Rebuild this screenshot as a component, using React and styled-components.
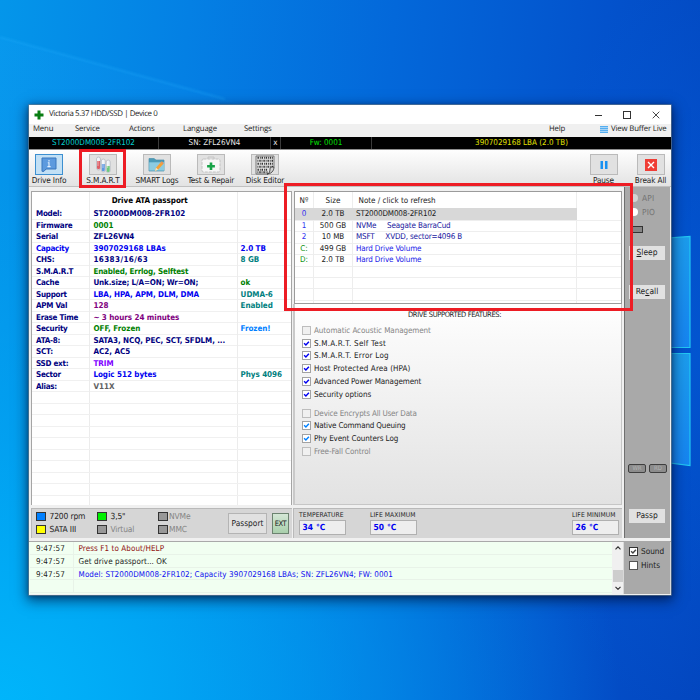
import React from "react";
import styled, { createGlobalStyle, css } from "styled-components";

const Global = createGlobalStyle`
  * { box-sizing: border-box; }
  body { margin: 0; }
  #root { width: 700px; height: 700px; overflow: hidden; }
`;

const tahoma = css`font-family: "DejaVu Sans Condensed", "DejaVu Sans", sans-serif; font-stretch: condensed;`;
const segoe = css`font-family: "Open Sans", "Noto Sans", sans-serif; font-stretch: normal;`;

const Desktop = styled.main`
  position: relative;
  width: 700px;
  height: 700px;
  padding: 105px 29px 0;
  overflow: hidden;
  ${tahoma}
  font-size: 8px;
  line-height: 11px;
  color: #1c1c1c;
  white-space: nowrap;
  text-rendering: geometricPrecision;
  background:
    radial-gradient(ellipse 620px 520px at 0 700px, rgba(0, 184, 252, 0.92), rgba(0, 170, 245, 0.6) 50%, transparent),
    radial-gradient(ellipse 180px 380px at 700px 350px, rgba(0, 100, 225, 0.45), transparent),
    linear-gradient(95deg, #0496ea 0%, #0480e4 25%, #0368da 52%, #0352cc 80%, #0345be 100%);
`;

const Wallpaper = styled.svg`
  position: absolute;
  inset: 0;
`;

const Window = styled.section`
  position: relative;
  display: flex;
  flex-direction: column;
  width: 642px;
  height: 490px;
  background: #f0f0f0;
  box-shadow: 0 0 0 0.6px #6b8090, 0 4px 12px 2px rgba(0, 15, 50, 0.6), 0 1px 5px rgba(0, 15, 50, 0.5);
`;

const TitleBar = styled.header`
  display: flex;
  align-items: center;
  height: 19px;
  padding: 0 11px 0 5px;
  background: #fff;
  ${segoe}
  font-size: 7.9px;
  letter-spacing: -0.4px;
  svg { flex: none; }
`;
const Title = styled.span`margin: 0 auto 0 5px;`;
const Controls = styled.div`display: flex; gap: 21px; align-items: center;`;

const MenuBar = styled.nav`
  display: grid;
  grid-template-columns: 42px 54px 54px 61px 305px 51px 11px 1fr;
  align-items: center;
  height: 13px;
  padding-left: 4px;
  padding-bottom: 2px;
  background: #f0f0f0;
  ${segoe}
  font-size: 7.8px;
  letter-spacing: -0.16px;
`;

const StatusStrip = styled.div`
  display: grid;
  grid-template-columns: 130px 112px 10px 91px 1fr;
  height: 12px;
  background: #000;
  text-align: center;
`;
const StatusCell = styled.div`
  color: ${(p) => p.$c};
  border-right: ${(p) => (p.$last ? "0" : "1px solid #3a3a3a")};
`;

const Toolbar = styled.div`
  display: flex;
  justify-content: space-between;
  height: 38px;
  padding-top: 4px;
  border-top: 1px solid #8d8d8d;
  border-bottom: 1px solid #c0c0c0;
  background: linear-gradient(#fefefe, #e3e3e3);
`;
const ToolGroup = styled.div`
  display: flex;
  margin: ${(p) => (p.$end ? "0 -3px 0 0" : "0 0 0 -7px")};
`;
const Tool = styled.div`
  display: flex;
  flex-direction: column;
  align-items: center;
  width: ${(p) => p.$w}px;
  font-size: 8.2px;
  letter-spacing: -0.14px;
`;
const ToolFace = styled.div`
  display: grid;
  place-items: center;
  width: 28px;
  height: 21px;
  border: 1px solid ${(p) => (p.$on ? "#3c8fd0" : "#bababa")};
  background: ${(p) => (p.$on ? "#c2e0f5" : "#e1e1e1")};
`;

const Body = styled.div`display: flex; height: 354px;`;
const Left = styled.div`width: 264px; padding: 4px 1px 0 2px;`;
const Right = styled.div`width: 331px; padding: 4px 2px 0 0;`;

const Passport = styled.div`
  height: 314px;
  overflow: hidden;
  border: 1px solid #a5a5a5;
  border-bottom: 0;
  background: #fff;
  font-weight: 700;
`;
const PassportRow = styled.div`
  display: grid;
  grid-template-columns: 58px 148px 1fr;
  height: ${(p) => (p.$head ? 16 : 11.5)}px;
  line-height: ${(p) => (p.$head ? 17 : 11.5)}px;
  border-bottom: ${(p) => (p.$head ? 0 : "1px solid #f0f0f0")};
`;
const PassportCell = styled.div`
  padding-left: 3.4px;
  border-right: 1px solid #ececec;
  color: ${(p) => p.$c || "#000080"};
  text-align: ${(p) => p.$align || "left"};
  padding-right: ${(p) => (p.$align ? 31 : 0)}px;
  letter-spacing: ${(p) => p.$ls || 0}px;
  &:first-child { padding-left: 4px; letter-spacing: -0.26px; }
  &:last-child { border-right: 0; padding-left: 2.6px; letter-spacing: -0.06px; }
`;

const Strip = styled.div`
  display: flex;
  align-items: center;
  height: 30px;
  margin-top: 3px;
  border-top: 1px solid #b9b9b9;
  border-left: 1px solid #b9b9b9;
  background: #d6d6d6;
`;
const Legend = styled.div`
  display: grid;
  grid-template-columns: 61px 61px 70px;
  grid-template-rows: 13px 13px;
  padding: 0 0 1px 4px;
  font-size: 8.4px;
`;
const LegendItem = styled.div`
  display: flex;
  align-items: center;
  gap: ${(p) => p.$gap}px;
  color: ${(p) => (p.$off ? "#858585" : "#1c1c1c")};
  letter-spacing: -0.12px;
`;
const Swatch = styled.i`
  width: 10px;
  height: 9px;
  border: 1px solid #333;
  background: ${(p) => p.$c};
`;
const Button = styled.div`
  display: grid;
  place-items: center;
  width: 39px;
  height: 21px;
  margin-right: 5px;
  border: 1px solid #b4b4b4;
  background: #e1e1e1;
  font-size: 8.3px;
`;
const ExtButton = styled(Button)`
  width: 17px;
  margin-right: 0;
  border-color: #6c8370;
  background: linear-gradient(#d4e7d6, #a9cfac);
  font-size: 7.5px;
  letter-spacing: -0.5px;
`;

const Drives = styled.div`
  height: 113px;
  margin-left: 1px;
  overflow: hidden;
  border: 1px solid #9b9b9b;
  background: #fff;
`;
const DriveRow = styled.div`
  display: grid;
  grid-template-columns: 19px 39px 224px 1fr;
  height: ${(p) => (p.$head ? 16 : 11.6)}px;
  line-height: ${(p) => (p.$head ? 17 : 11.6)}px;
  white-space: pre;
`;
const DriveCell = styled.div`
  padding-left: ${(p) => p.$pl || 0}px;
  text-align: ${(p) => (p.$center ? "center" : "left")};
  letter-spacing: ${(p) => p.$ls || 0}px;
  color: ${(p) => p.$c || "#1c1c1c"};
  background: ${(p) => (p.$hl ? "#d8d8d8" : "transparent")};
  border-right: 1px solid ${(p) => (p.$hl ? "#d8d8d8" : "#ededed")};
  border-bottom: ${(p) => (p.$head ? 0 : "1px solid #eeeeee")};
  &:last-child { border-right: 0; }
`;

const Features = styled.div`
  height: 201px;
  padding: 6px 0 0 7px;
  border: 1px solid #c6c6c6;
  border-left: 2px solid #c9c9c9;
  border-top: 0;
  background: linear-gradient(#fff, #fafafa 15%, #e2e2e2);
`;
const FeatureTitle = styled.div`
  height: 14px;
  padding-left: 106px;
  font-size: 7.5px;
  letter-spacing: -0.36px;
  line-height: 10px;
`;
const Feature = styled.div`
  display: flex;
  align-items: center;
  gap: 3px;
  height: 12.8px;
  margin-bottom: ${(p) => (p.$gap ? 6 : 0)}px;
  color: ${(p) => (p.$off ? "#858585" : "#1c1c1c")};
  letter-spacing: ${(p) => p.$ls || -0.08}px;
`;

const Readings = styled(Strip)`
  align-items: flex-start;
  padding: 2px 3px 0 5px;
  gap: 24px;
`;
const Reading = styled.div`
  width: 47px;
  margin-left: ${(p) => (p.$end ? "auto" : 0)};
  font-size: 6.7px;
  line-height: 9px;
  letter-spacing: 0.1px;
`;
const ReadingBox = styled.div`
  width: 47px;
  height: 15px;
  padding-left: 2.5px;
  border: 1px solid #b0b0b0;
  background: #eeeeee;
  color: #0000f0;
  font-size: 8.4px;
  line-height: 13px;
  letter-spacing: 0.1px;
  font-weight: 700;
`;

const Side = styled.aside`
  display: flex;
  flex-direction: column;
  width: 46px;
  height: 351px;
  padding: 4px 0 0 5px;
  border-left: 1px solid #6f6f6f;
  background: #a9a9a9;
`;
const Radio = styled.div`
  display: flex;
  align-items: center;
  gap: 4px;
  height: 14px;
  color: #747474;
  font-size: 8.3px;
  letter-spacing: 0.2px;
  i { width: 8px; height: 8px; border-radius: 50%; background: ${(p) => (p.$on ? "#d4d4d4" : "#fff")}; }
`;
const Lamp = styled.div`
  width: 13px;
  height: 7px;
  margin: 7px 0 13px 0;
  border: 1px solid #333;
  background: #858585;
`;
const SideButton = styled.div`
  width: 36px;
  height: 14px;
  margin-left: -1px;
  margin-bottom: ${(p) => p.$mb || 0}px;
  background: #e1e1e1;
  text-align: center;
  font-size: 8.4px;
  line-height: 13px;
`;
const Badges = styled.div`display: flex; gap: 3px; margin: 0 0 36px -2px;`;
const Badge = styled.div`
  width: 18px;
  height: 9px;
  border: 1px solid #3f3f3f;
  border-radius: 2px;
  background: #8c8c8c;
  color: #b3b3b3;
  text-align: center;
  font-size: 6px;
  line-height: 7px;
`;

const Footer = styled.div`display: flex; height: 53px; border-top: 1px solid #a9a9a9;`;
const Log = styled.div`
  flex: 1;
  overflow: hidden;
  padding-left: 1px;
  background: #f1fff1;
`;
const LogRow = styled.div`
  display: grid;
  grid-template-columns: 44px 1fr;
  height: 12.8px;
  line-height: 14px;
  border-bottom: 1px solid #e8f3e8;
`;
const LogTime = styled.div`padding-left: 6px; border-right: 1px solid #e8f3e8; letter-spacing: 0.18px;`;
const LogText = styled.div`
  padding-left: 4.6px;
  color: ${(p) => p.$c};
  letter-spacing: 0.08px;
`;
const ScrollBar = styled.div`
  display: flex;
  flex-direction: column;
  align-items: center;
  width: 11px;
  padding: 4px 0 4px;
  background: #f0f0f0;
`;
const Thumb = styled.div`width: 10px; height: 12px; margin: auto 0 4px; background: #cdcdcd;`;
const Options = styled.div`
  width: 48px;
  padding: 2px 0 0 5px;
  border-left: 1px solid #d9d9d9;
  border-right: 1px solid #d9d9d9;
  background: #a9a9a9;
`;
const Option = styled.div`display: flex; align-items: center; gap: 3px; height: 14.6px; font-size: 8.2px;`;

const Marker = styled.div`
  position: absolute;
  left: ${(p) => p.$x}px;
  top: ${(p) => p.$y}px;
  width: ${(p) => p.$w}px;
  height: ${(p) => p.$h}px;
  border: 3px solid #ed1c24;
`;

const Check = ({ color, off, box = "#a2a2a2" }) => (
  <svg width="9" height="9" viewBox="0 0 9 9">
    <rect x=".5" y=".5" width="8" height="8" fill={off ? "#f0f0f0" : "#fff"} stroke={off ? "#bdbdbd" : box} />
    {color && <path d="M2.1 4.2 3.9 6 6.9 2.7" fill="none" stroke={color} strokeWidth="1.4" />}
  </svg>
);

const InfoIcon = () => (
  <svg width="18" height="15" viewBox="0 0 18 15">
    <path d="M2 1h14v11H6l-2 2.3H2z" fill="#5c9ade" stroke="#3976bd" />
    <path d="M9 3v1.4M7.8 5.7H9v3.6M7.4 9.6h3.2" stroke="#e4f1ff" strokeWidth="1.1" fill="none" />
  </svg>
);
const TubesIcon = () => (
  <svg width="17" height="17" viewBox="0 0 17 17">
    <g stroke="#b0b5bd" strokeWidth=".7" fill="#edf1f5">
      <rect x="1.5" y="1" width="4" height="13" rx="2" />
      <rect x="6.3" y="3" width="4" height="13" rx="2" />
      <rect x="11.2" y="4" width="4" height="12.5" rx="2" />
    </g>
    <path d="M2 5h3v6.8a1.5 1.5 0 0 1-3 0z" fill="#dc5f66" />
    <path d="M6.8 8h3v5.8a1.5 1.5 0 0 1-3 0z" fill="#5e98e1" />
    <path d="M11.7 10h3v4.5a1.5 1.5 0 0 1-3 0z" fill="#6cc97c" />
    <path d="M3 2v8M8 4v8M12.7 5v7" stroke="#fff" strokeWidth=".7" opacity=".7" />
  </svg>
);
const FolderIcon = () => (
  <svg width="18" height="16" viewBox="0 0 18 16">
    <path d="M1 3V1.5h5L8 3h8v11H1z" fill="#4b9bb7" stroke="#4a90ac" strokeWidth=".7" />
    <path d="M1.2 5.3h15v8.3H1.2z" fill="#8ccce0" />
    <path d="m7 14 1-3.2 4.5-5.3L15 7.3l-4.8 5.3z" fill="#f5a034" />
    <path d="m12.5 5.5 1.2-1.2 2.2 1.9-1.2 1.4z" fill="#ed924e" />
    <path d="m7 14 1-3.2 2.2 1.8z" fill="#f7e6bd" />
  </svg>
);
const KitIcon = () => (
  <svg width="20" height="17" viewBox="0 0 20 17">
    <path d="M7 3V1h6v2" fill="none" stroke="#c4c4c4" />
    <rect x="1" y="3" width="18" height="13" rx="1.5" fill="#f7f7f7" stroke="#c2c2c2" strokeDasharray="3 1" />
    <path d="M8.7 6.4h2.6V9h2.6v2.4h-2.6V14H8.7v-2.6H6.1V9h2.6z" fill="#18a348" />
  </svg>
);
const HexIcon = () => (
  <svg width="20" height="20" viewBox="0 0 20 20">
    <path d="M1 1h18v11l-6 7H1z" fill="#e4e4e4" stroke="#4d4d4d" strokeWidth=".7" />
    {[2.8, 5.8, 8.8, 11.8, 14.8, 17.3].map((y, i) => (
      <path key={y} d={`M2.5 ${y}H${i > 3 ? 13 : 18}`} stroke="#333" strokeWidth="2" strokeDasharray={i % 2 ? ".8 1 1.4 .9" : "1.4 1 .8 .9"} />
    ))}
    <path d="M19 12c-3 0-4 0-4 2 0 3-1 5-3 5 4 0 7-3 7-7z" fill="#d1d1d1" stroke="#333" strokeWidth=".8" />
  </svg>
);
const PauseIcon = () => (
  <svg width="8" height="8" viewBox="0 0 8 8"><path d="M.5 0H3v8H.5zM5 0h2.5v8H5z" fill="#1991f1" /></svg>
);
const BreakIcon = () => (
  <svg width="12" height="12" viewBox="0 0 12 12">
    <rect width="12" height="12" fill="#ef3e36" />
    <path d="m3 3 6 6m0-6L3 9" stroke="#fff" strokeWidth="1.4" />
  </svg>
);

const green = "#008000";
const blue = "#0000f0";
const teal = "#008080";
const purple = "#800080";
const passport = [
  { k: "Model:", v: "ST2000DM008-2FR102" },
  { k: "Firmware", v: "0001", c: green },
  { k: "Serial", v: "ZFL26VN4", ls: -0.05 },
  { k: "Capacity", kc: blue, v: "3907029168 LBAs", c: blue, x: "2.0 TB", xc: blue },
  { k: "CHS:", v: "16383/16/63", ls: 0.4, x: "8 GB", xc: teal },
  { k: "S.M.A.R.T", v: "Enabled, Errlog, Selftest", c: green, ls: -0.18 },
  { k: "Cache", v: "Unk.size; L/A=ON; Wr=ON;", ls: -0.15, x: "ok", xc: green },
  { k: "Support", v: "LBA, HPA, APM, DLM, DMA", c: blue, ls: -0.08, x: "UDMA-6", xc: teal },
  { k: "APM Val", v: "128", c: purple, x: "Enabled", xc: teal },
  { k: "Erase Time", v: "~ 3 hours 24 minutes", c: purple, ls: -0.05 },
  { k: "Security", v: "OFF, Frozen", c: green, x: "Frozen!", xc: "#0080ff" },
  { k: "ATA-8:", v: "SATA3, NCQ, PEC, SCT, SFDLM, ...", ls: -0.08 },
  { k: "SCT:", v: "AC2, AC5" },
  { k: "SSD ext:", v: "TRIM", c: "#8000ff" },
  { k: "Sector", v: "Logic 512 bytes", c: blue, ls: -0.05, x: "Phys 4096", xc: teal },
  { k: "Alias:", v: "V11X", c: "#606060" },
  ...Array.from({ length: 10 }, () => ({})),
];
const drives = [
  ["0", "2.0 TB", "ST2000DM008-2FR102", "#1c1c1c"],
  ["1", "500 GB", "NVMe     Seagate BarraCud", "#1818a0"],
  ["2", "10 MB", "MSFT     XVDD, sector=4096 B", "#1818a0"],
  ["C:", "499 GB", "Hard Drive Volume", "#2020e8"],
  ["D:", "2.0 TB", "Hard Drive Volume", "#2020e8"],
  [], [], [], [],
];
const features = [
  ["Automatic Acoustic Management"],
  ["S.M.A.R.T. Self Test", "#0000f0", false, 0.24],
  ["S.M.A.R.T. Error Log", "#0000f0", false, 0.24],
  ["Host Protected Area (HPA)", "#0000f0", false, 0.1],
  ["Advanced Power Management", "#0000f0"],
  ["Security options", "#0000f0", true],
  ["Device Encrypts All User Data", null, false, -0.17],
  ["Native Command Queuing", "#0080ff", false, -0.17],
  ["Phy Event Counters Log", "#0080ff"],
  ["Free-Fall Control"],
];
const legend = [
  ["7200 rpm", "#0080ff"], ["3,5\"", "#00f000"], ["NVMe", "#989898", true],
  ["SATA III", "#ffff00"], ["Virtual", "#989898", true], ["MMC", "#989898", true],
];
const tools = [
  ["Drive Info", InfoIcon], ["S.M.A.R.T", TubesIcon], ["SMART Logs", FolderIcon],
  ["Test & Repair", KitIcon], ["Disk Editor", HexIcon],
];
const log = [
  ["9:47:57", "Press F1 to About/HELP", "#901010"],
  ["9:47:57", "Get drive passport... OK", "#1c1c1c"],
  ["9:47:57", "Model: ST2000DM008-2FR102; Capacity 3907029168 LBAs; SN: ZFL26VN4; FW: 0001", "#1010f0"],
  ["", ""],
];

export default function App() {
  return (
    <Desktop>
      <Global />
      <Wallpaper width="700" height="700" viewBox="0 0 700 700">
        <defs>
          <filter id="soft"><feGaussianBlur stdDeviation="1.2" /></filter>
          <linearGradient id="pane" x1="0" y1="0" x2="0" y2="1">
            <stop offset="0" stopColor="#1c9cec" />
            <stop offset="1" stopColor="#1684f0" />
          </linearGradient>
          <linearGradient id="beam" x1="0" y1="0" x2="1" y2="0">
            <stop offset="0" stopColor="#20a7ff" stopOpacity=".14" />
            <stop offset="1" stopColor="#20a7ff" stopOpacity="0" />
          </linearGradient>
        </defs>
        <path d="M0 37 225 99 400 150H0z" fill="url(#beam)" />
        <path d="M0 37 225 99" stroke="#28b4ff" strokeWidth="1.5" opacity=".35" filter="url(#soft)" />
        <g fill="url(#pane)" stroke="#22c8f4" strokeWidth="1.2">
          <path d="M600 243 690 236.5V347.5H600z" />
          <path d="M600 353.5H690V465.5L600 454z" />
        </g>
      </Wallpaper>
      <Window>
        <TitleBar>
          <svg width="10" height="10" viewBox="0 0 10 10"><path d="M3.5 .5h3v3h3v3h-3v3h-3v-3h-3v-3h3z" fill="#087d12" /></svg>
          <Title>Victoria 5.37 HDD/SSD | Device 0</Title>
          <Controls>
            <svg width="7" height="8"><path d="M0 4.5h7" stroke="#333" /></svg>
            <svg width="8" height="8"><rect x=".5" y=".5" width="7" height="7" fill="none" stroke="#333" /></svg>
            <svg width="8" height="8"><path d="m.7.7 6.6 6.6m0-6.6L.7 7.3" stroke="#333" strokeWidth=".9" /></svg>
          </Controls>
        </TitleBar>
        <MenuBar>
          <span>Menu</span><span>Service</span><span>Actions</span><span>Language</span><span>Settings</span><span>Help</span>
          <svg width="8" height="8" viewBox="0 0 8 8"><path d="M0 .5h8M0 2.5h8M0 4.5h8M0 6.5h8" stroke="#55aef0" /><path d="M0 1.5h8M0 3.5h8M0 5.5h8" stroke="#a9d4f5" /></svg>
          <span>View Buffer Live</span>
        </MenuBar>
        <StatusStrip>
          <StatusCell $c="#00d0d0">ST2000DM008-2FR102</StatusCell>
          <StatusCell $c="#e8e8e8">SN: ZFL26VN4</StatusCell>
          <StatusCell $c="#e8e8e8">x</StatusCell>
          <StatusCell $c="#00e000">Fw: 0001</StatusCell>
          <StatusCell $c="#e0e000" $last>3907029168 LBA (2.0 TB)</StatusCell>
        </StatusStrip>
        <Toolbar>
          <ToolGroup>
            {tools.map(([name, Icon], i) => (
              <Tool key={name} $w={54}><ToolFace $on={i === 0}><Icon /></ToolFace>{name}</Tool>
            ))}
          </ToolGroup>
          <ToolGroup $end>
            <Tool $w={47}><ToolFace><PauseIcon /></ToolFace>Pause</Tool>
            <Tool $w={47}><ToolFace><BreakIcon /></ToolFace>Break All</Tool>
          </ToolGroup>
        </Toolbar>
        <Body>
          <Left>
            <Passport>
              <PassportRow $head>
                <PassportCell /><PassportCell $c="#000" $align="center" $ls={-0.06}>Drive ATA passport</PassportCell><PassportCell />
              </PassportRow>
              {passport.map((r, i) => (
                <PassportRow key={i}>
                  <PassportCell $c={r.kc}>{r.k}</PassportCell>
                  <PassportCell $c={r.c} $ls={r.ls}>{r.v}</PassportCell>
                  <PassportCell $c={r.xc}>{r.x}</PassportCell>
                </PassportRow>
              ))}
            </Passport>
            <Strip>
              <Legend>
                {legend.map(([name, c, off], i) => (
                  <LegendItem key={name} $off={off} $gap={i % 3 === 2 ? 1 : 3.5}><Swatch $c={c} />{name}</LegendItem>
                ))}
              </Legend>
              <Button>Passport</Button>
              <ExtButton>EXT</ExtButton>
            </Strip>
          </Left>
          <Right>
            <Drives>
              <DriveRow $head>
                <DriveCell $head $center>Nº</DriveCell><DriveCell $head $center>Size</DriveCell>
                <DriveCell $head $pl={5.5}>Note / click to refresh</DriveCell><DriveCell $head />
              </DriveRow>
              {drives.map(([n, size, note, c], i) => (
                <DriveRow key={i}>
                  <DriveCell $hl={i === 0} $center $c={i > 2 ? "#089008" : "#3030f0"}>{n}</DriveCell>
                  <DriveCell $hl={i === 0} $center>{size}</DriveCell>
                  <DriveCell $hl={i === 0} $pl={3} $ls={-0.14} $c={c}>{note}</DriveCell>
                  <DriveCell />
                </DriveRow>
              ))}
            </Drives>
            <Features>
              <FeatureTitle>DRIVE SUPPORTED FEATURES:</FeatureTitle>
              {features.map(([name, c, gap, ls]) => (
                <Feature key={name} $off={!c} $gap={gap} $ls={ls}><Check color={c} off={!c} />{name}</Feature>
              ))}
            </Features>
            <Readings>
              <Reading>TEMPERATURE<ReadingBox>34 °C</ReadingBox></Reading>
              <Reading>LIFE MAXIMUM<ReadingBox>50 °C</ReadingBox></Reading>
              <Reading $end>LIFE MINIMUM<ReadingBox>26 °C</ReadingBox></Reading>
            </Readings>
          </Right>
          <Side>
            <Radio $on><i />API</Radio>
            <Radio><i />PIO</Radio>
            <Lamp />
            <SideButton $mb={25}><u>S</u>leep</SideButton>
            <SideButton $mb={165}>Re<u>c</u>all</SideButton>
            <Badges><Badge>WR</Badge><Badge>RD</Badge></Badges>
            <SideButton>Passp</SideButton>
          </Side>
        </Body>
        <Footer>
          <Log>
            {log.map(([t, m, c], i) => <LogRow key={i}><LogTime>{t}</LogTime><LogText $c={c}>{m}</LogText></LogRow>)}
          </Log>
          <ScrollBar>
            <svg width="6" height="4"><path d="m.5 3.3 2.5-2.5 2.5 2.5" fill="none" stroke="#333" strokeWidth="1.2" /></svg>
            <Thumb />
            <svg width="6" height="4"><path d="M.5.8 3 3.3 5.5.8" fill="none" stroke="#333" strokeWidth="1.2" /></svg>
          </ScrollBar>
          <Options>
            <Option><Check color="#444" box="#333" />Sound</Option>
            <Option><Check box="#555" />Hints</Option>
          </Options>
        </Footer>
      </Window>
      <Marker $x={79} $y={149} $w={47} $h={39} />
      <Marker $x={284} $y={183} $w={349} $h={128} />
    </Desktop>
  );
}
